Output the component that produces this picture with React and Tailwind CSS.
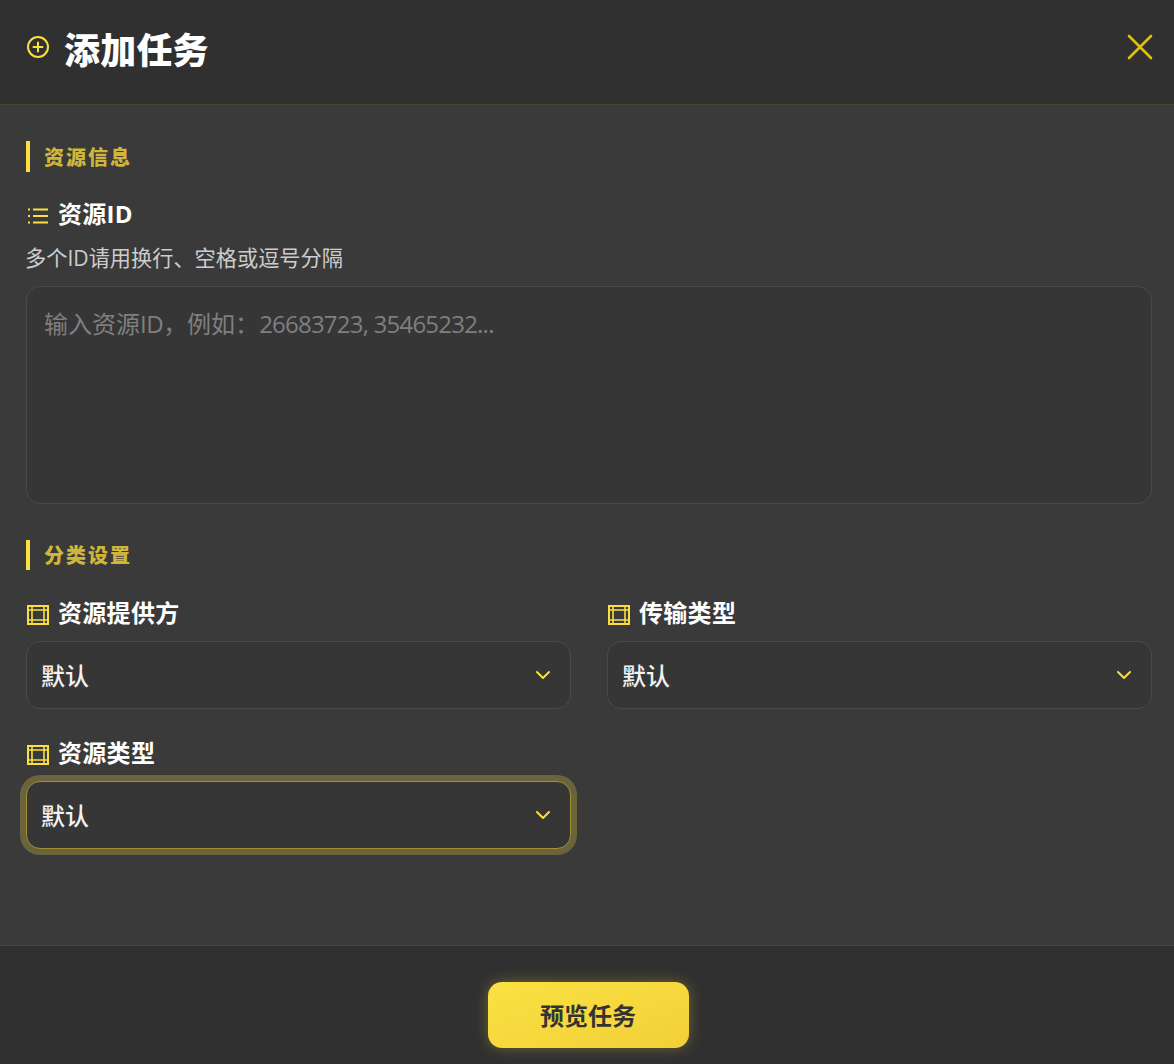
import React from "react";

function Film() {
  return (
    <svg width="24" height="22" viewBox="0 0 24 22" fill="none" stroke="#fbdf3f" strokeWidth="2" className="mt-[4px] shrink-0">
      <rect x="2" y="2" width="20" height="18" />
      <path d="M6 2v18M18 2v18M2 6h20M2 16h20" strokeWidth="1.6" />
    </svg>
  );
}

function Chevron() {
  return (
    <svg width="16" height="10" viewBox="0 0 16 10" fill="none" stroke="#fbdf3f" strokeWidth="2" strokeLinecap="round" strokeLinejoin="round">
      <path d="M2 2l6 6 6-6" />
    </svg>
  );
}

function SectionTitle({ children, tall }) {
  return (
    <div className={"flex items-center border-l-4 border-[#fbdf3f] pl-[14px] pt-[2px] text-[20px] font-black tracking-[2px] text-[#cfb53a] " + (tall ? "h-[31px]" : "h-[30px]")}>
      {children}
    </div>
  );
}

function Label({ icon, children }) {
  return (
    <div className="flex h-[32px] items-center gap-[8px] text-[24px] font-bold tracking-[0.3px] leading-[32px] text-white">
      {icon}
      <span>{children}</span>
    </div>
  );
}

function Select({ focused }) {
  return (
    <div
      className={
        "mt-[12px] flex h-[68px] items-center justify-between rounded-[14px] border bg-[#363636] pl-[14px] pr-[19px] text-[24px] font-medium text-[#f2f2f2] " +
        (focused ? "border-[#a3902f] shadow-[0_0_0_6px_#6b633b]" : "border-[#4a4a4a]")
      }
    >
      <span className="pt-[2px]">默认</span>
      <Chevron />
    </div>
  );
}

export default function App() {
  return (
    <div className="flex h-[1064px] w-full transform-gpu flex-col overflow-hidden bg-[#3a3a3a] [font-family:'Open_Sans','Noto_Sans_CJK_SC',sans-serif]">
      <header className="flex h-[105px] shrink-0 items-start justify-between border-b border-[#45452f] bg-[#303030] pl-[26px] pr-[21px]">
        <div className="mt-[26px] flex items-start gap-[14px]">
          <svg className="mt-[9px]" width="24" height="24" viewBox="0 0 24 24" fill="none" stroke="#fbdf3f" strokeWidth="2" strokeLinecap="round">
            <circle cx="12" cy="12" r="10" />
            <path d="M12 7.5v9M7.5 12h9" />
          </svg>
          <h1 className="text-[36px] font-black tracking-[0.2px] leading-[50px] text-white">添加任务</h1>
        </div>
        <svg className="mt-[34px]" width="26" height="26" viewBox="0 0 26 26" fill="none" stroke="#dcc20a" strokeWidth="2.6" strokeLinecap="round">
          <path d="M2 2l22 22M24 2L2 24" />
        </svg>
      </header>

      <main className="flex-1 pl-[26px] pr-[22px] pt-[36px]">
        <SectionTitle tall>资源信息</SectionTitle>
        <div className="mt-[26px]">
          <Label
            icon={
              <svg width="24" height="16" viewBox="0 0 24 16" fill="none" stroke="#fbdf3f" strokeWidth="2" className="mt-[4px] shrink-0">
                <path d="M7 1.5h15M7 8h15M7 14.5h15" />
                <path d="M2 1.5h2M2 8h2M2 14.5h2" />
              </svg>
            }
          >
            资源ID
          </Label>
        </div>
        <p className="-ml-px mt-[13px] text-[21.2px] leading-[30px] text-[#cdcdcd]">多个ID请用换行、空格或逗号分隔</p>
        <div className="mt-[13px] h-[218px] rounded-[14px] border border-[#4a4a4a] bg-[#363636] px-[17px] py-[19px] text-[24px] leading-[36px] text-[#7f7f7f]">
          输入资源<span className="tracking-[-0.5px]">ID</span>，例如：<span className="tracking-[-0.78px]">26683723, 35465232...</span>
        </div>

        <div className="mt-[36px]">
          <SectionTitle>分类设置</SectionTitle>
        </div>

        <div className="mt-[27px] grid grid-cols-2 gap-x-[36px] gap-y-[28px]">
          <div>
            <Label icon={<Film />}>资源提供方</Label>
            <Select />
          </div>
          <div>
            <Label icon={<Film />}>传输类型</Label>
            <Select />
          </div>
          <div>
            <Label icon={<Film />}>资源类型</Label>
            <Select focused />
          </div>
        </div>
      </main>

      <footer className="flex h-[119px] shrink-0 items-start justify-center border-t border-[#454545] bg-[#303030] pt-[36px]">
        <button className="ml-[2px] h-[66px] w-[201px] rounded-[14px] bg-gradient-to-br from-[#fbe142] to-[#f2d038] pt-[2px] text-[24px] font-bold text-[#333333] shadow-[0_0_14px_rgba(251,223,63,0.3)]">
          预览任务
        </button>
      </footer>
    </div>
  );
}
